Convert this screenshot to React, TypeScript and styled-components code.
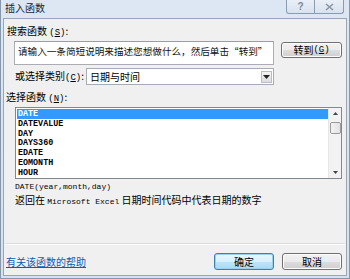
import React from "react";
import styled, { createGlobalStyle } from "styled-components";

const Global = createGlobalStyle`
  html, body { margin: 0; padding: 0; background: #dfe8f3; }
  body { font-family: "Noto Sans CJK SC", "Liberation Sans", sans-serif; }
  * { box-sizing: border-box; }
`;

const CJK = `"Noto Sans CJK SC", "Liberation Sans", sans-serif`;
const MONO = `"Liberation Mono", "Noto Sans CJK SC", monospace`;

const Window = styled.div`
  width: 350px;
  height: 279px;
  background: linear-gradient(#dde7f3, #d6e1ee);
  border: 1px solid #8797ab;
  border-top: none;
  padding: 0 2px 2px 2px;
  display: flex;
  flex-direction: column;
  font-family: ${CJK};
  font-size: 10px;
  color: #000;
`;

const TitleBar = styled.div`
  height: 18px;
  display: flex;
  align-items: flex-start;
  justify-content: space-between;
`;

const Title = styled.div`
  padding: 2px 0 0 2px;
  line-height: 12px;
  font-size: 10px;
  color: #1c2430;
`;

const Controls = styled.div`
  display: flex;
  margin-right: 3px;
`;

const CtrlBtn = styled.div<{ $last?: boolean }>`
  width: 29px;
  height: 14px;
  border: 1px solid #8b9cb1;
  border-top: none;
  border-left: ${(p) => (p.$last ? "none" : "1px solid #8b9cb1")};
  border-radius: ${(p) => (p.$last ? "0 0 3px 0" : "0 0 0 3px")};
  background: linear-gradient(#e9eff7, #d8e2ee);
  display: flex;
  align-items: center;
  justify-content: center;
  font-family: "Liberation Sans", sans-serif;
  font-size: 10px;
  font-weight: bold;
  color: #7d8896;
  line-height: 1;
`;

const Client = styled.div`
  flex: 1;
  background: #f0f0f0;
  border: 1px solid #9aa6b5;
  display: flex;
  flex-direction: column;
`;

const Label = styled.div<{ $left: number; $top: number }>`
  margin: ${(p) => p.$top}px 0 0 ${(p) => p.$left}px;
  line-height: 12px;
  white-space: nowrap;
`;

const Key = styled.span`
  font-family: ${MONO};
  font-size: 9px;
  u { text-decoration: underline; }
`;

const SearchRow = styled.div`
  display: flex;
  align-items: flex-start;
  margin: 2px 0 0 10px;
`;

const SearchBox = styled.div`
  width: 260px;
  height: 24px;
  background: #fff;
  border: 1px solid #abadb3;
  border-top-color: #9a9da3;
  padding: 3px 0 0 3px;
  line-height: 12px;
  font-size: 9.6px;
  white-space: nowrap;
  overflow: hidden;
  color: #111;
`;

const Button = styled.div<{ $w: number; $focus?: boolean }>`
  width: ${(p) => p.$w}px;
  height: 17px;
  border: 1px solid ${(p) => (p.$focus ? "#3c7fb1" : "#707070")};
  border-radius: 3px;
  background: ${(p) =>
    p.$focus
      ? "linear-gradient(#eaf6fd 0%, #d9f0fc 50%, #bee6fd 51%, #a7d9f5 100%)"
      : "linear-gradient(#f2f2f2 0%, #ebebeb 50%, #dddddd 51%, #cfcfcf 100%)"};
  box-shadow: inset 0 0 0 1px ${(p) => (p.$focus ? "#98d1ef" : "#fcfcfc")};
  display: flex;
  align-items: center;
  justify-content: center;
  line-height: 12px;
  white-space: nowrap;
`;

const GoButton = styled(Button)`
  height: 16px;
  margin: 1px 0 0 7px;
`;

const CategoryRow = styled.div`
  display: flex;
  align-items: center;
  margin: 3px 0 0 11px;
  height: 17px;
`;

const CategoryLabel = styled.div`
  width: 71px;
  line-height: 12px;
  white-space: nowrap;
`;

const Select = styled.div`
  width: 188px;
  height: 17px;
  background: #fff;
  border: 1px solid #a5acb5;
  display: flex;
  align-items: center;
  justify-content: space-between;
  padding: 0 1px 0 3px;
  line-height: 12px;
`;

const DropBtn = styled.div`
  width: 11px;
  height: 12px;
  border: 1px solid #b9bec5;
  background: linear-gradient(#f4f4f4, #dcdcdc);
  display: flex;
  align-items: center;
  justify-content: center;
`;

const ListBox = styled.div`
  width: 327px;
  height: 72px;
  margin: 2px 0 0 11px;
  background: #fff;
  border: 1px solid #828790;
  display: flex;
`;

const Items = styled.div`
  flex: 1;
  padding: 1px 0 0 1px;
  display: flex;
  flex-direction: column;
`;

const Item = styled.div<{ $sel?: boolean }>`
  height: 9.8px;
  line-height: 10px;
  padding-left: 1px;
  font-family: ${MONO};
  font-size: 8.4px;
  font-weight: bold;
  background: ${(p) => (p.$sel ? "#3399ff" : "transparent")};
  color: ${(p) => (p.$sel ? "#fff" : "#000")};
`;

const ScrollBar = styled.div`
  width: 13px;
  display: flex;
  flex-direction: column;
  align-items: center;
  background: #f2f2f2;
  border-left: 1px solid #e6e6e6;
`;

const ScrollArrow = styled.div`
  height: 11px;
  display: flex;
  align-items: center;
  justify-content: center;
`;

const Thumb = styled.div`
  width: 11px;
  height: 12px;
  border: 1px solid #9a9a9a;
  border-radius: 2px;
  background: linear-gradient(90deg, #f3f3f3, #e2e2e2);
  margin-top: 3px;
`;

const Sig = styled.div`
  margin: 2px 0 0 11px;
  line-height: 12px;
  font-family: ${MONO};
  font-size: 8px;
  white-space: nowrap;
`;

const Desc = styled.div`
  margin: 1px 0 0 11px;
  line-height: 12px;
  white-space: nowrap;
`;

const Latin = styled.span`
  font-family: ${MONO};
  font-size: 8px;
`;

const Spacer = styled.div`
  flex: 1;
`;

const Separator = styled.div`
  margin: 0 1px;
  height: 2px;
  border-top: 1px solid #dcdcdc;
  border-bottom: 1px solid #ffffff;
`;

const Footer = styled.div`
  display: flex;
  align-items: center;
  padding: 8px 4px 5px 2px;
`;

const HelpLink = styled.a`
  color: #0b5fb0;
  text-decoration: underline;
  line-height: 12px;
  flex: 1;
  cursor: pointer;
`;

const FootButtons = styled.div`
  display: flex;
  gap: 8px;
`;

const items = ["DATE", "DATEVALUE", "DAY", "DAYS360", "EDATE", "EOMONTH", "HOUR"];

export default function App() {
  return (
    <>
      <Global />
      <Window>
        <TitleBar>
          <Title>插入函数</Title>
          <Controls>
            <CtrlBtn>?</CtrlBtn>
            <CtrlBtn $last>
              <svg width="9" height="8" viewBox="0 0 9 8">
                <path d="M1 1 L8 7 M8 1 L1 7" stroke="#8a95a3" strokeWidth="1.6" />
              </svg>
            </CtrlBtn>
          </Controls>
        </TitleBar>
        <Client>
          <Label $left={3} $top={6}>
            搜索函数 <Key>(<u>S</u>)</Key>:
          </Label>
          <SearchRow>
            <SearchBox>请输入一条简短说明来描述您想做什么，然后单击“转到”</SearchBox>
            <GoButton $w={61}>
              转到<Key>(<u>G</u>)</Key>
            </GoButton>
          </SearchRow>
          <CategoryRow>
            <CategoryLabel>
              或选择类别<Key>(<u>C</u>)</Key>:
            </CategoryLabel>
            <Select>
              <span>日期与时间</span>
              <DropBtn>
                <svg width="7" height="4" viewBox="0 0 7 4">
                  <path d="M0 0 H7 L3.5 4 Z" fill="#222" />
                </svg>
              </DropBtn>
            </Select>
          </CategoryRow>
          <Label $left={2} $top={6}>
            选择函数 <Key>(<u>N</u>)</Key>:
          </Label>
          <ListBox>
            <Items>
              {items.map((it, i) => (
                <Item key={it} $sel={i === 0}>
                  {it}
                </Item>
              ))}
            </Items>
            <ScrollBar>
              <ScrollArrow>
                <svg width="5" height="3" viewBox="0 0 5 3">
                  <path d="M0 3 L2.5 0 L5 3 Z" fill="#444" />
                </svg>
              </ScrollArrow>
              <Thumb />
              <Spacer />
              <ScrollArrow>
                <svg width="5" height="3" viewBox="0 0 5 3">
                  <path d="M0 0 L5 0 L2.5 3 Z" fill="#444" />
                </svg>
              </ScrollArrow>
            </ScrollBar>
          </ListBox>
          <Sig>DATE(year,month,day)</Sig>
          <Desc>
            返回在 <Latin>Microsoft Excel</Latin> 日期时间代码中代表日期的数字
          </Desc>
          <Spacer />
          <Separator />
          <Footer>
            <HelpLink>有关该函数的帮助</HelpLink>
            <FootButtons>
              <Button $w={60} $focus>
                确定
              </Button>
              <Button $w={60}>取消</Button>
            </FootButtons>
          </Footer>
        </Client>
      </Window>
    </>
  );
}
